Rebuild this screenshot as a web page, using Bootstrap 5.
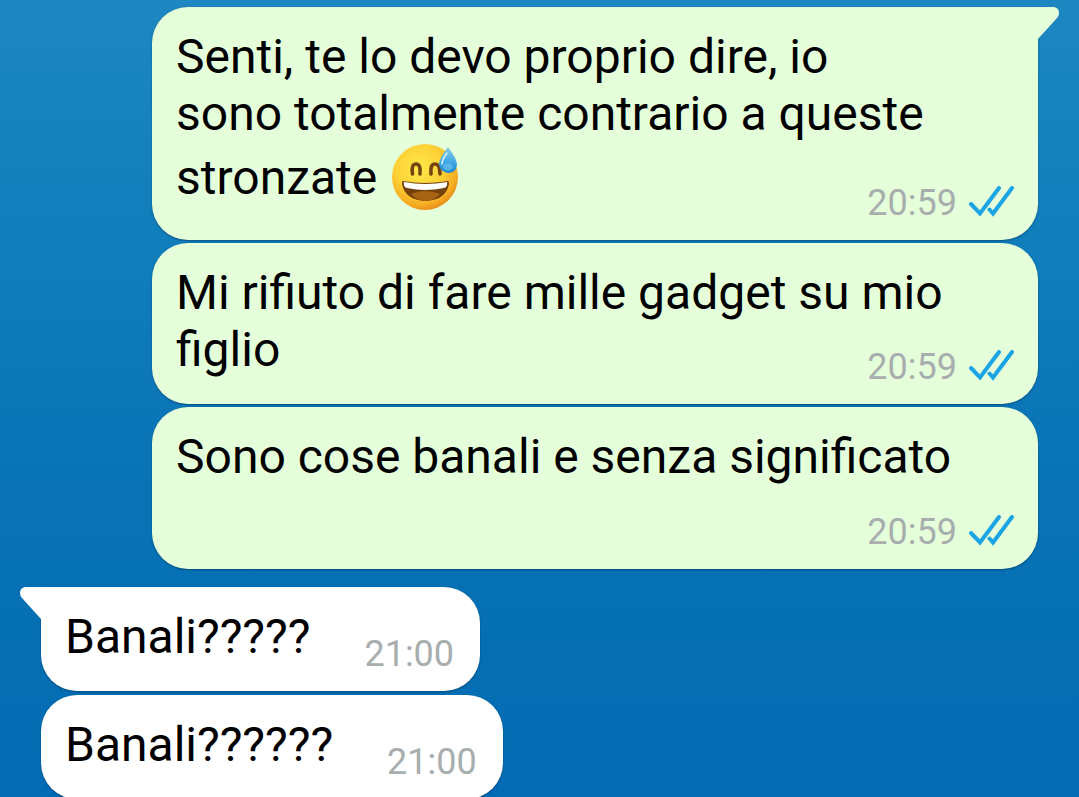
<!DOCTYPE html>
<html lang="it">
<head>
<meta charset="utf-8">
<meta name="viewport" content="width=device-width, initial-scale=1">
<title>Chat</title>
<link href="https://cdn.jsdelivr.net/npm/bootstrap@5.3.0/dist/css/bootstrap.min.css" rel="stylesheet">
<style>
  html { background: #026bb3; }
  body {
    font-family: Roboto, "Noto Sans", sans-serif;
    font-size: 48px;
    line-height: 57px;
    color: #000;
    background: linear-gradient(#1e87c2 0, #1784bf 90px, #0f7cbb 280px, #0873b5 480px, #026bb3 797px);
    height: 100vh;
    overflow: hidden;
  }
  .thread { padding: 7px 41px 0; }
  .outgoing { gap: 3px; margin-left: 111px; }
  .incoming { gap: 4px; margin-top: 18px; }
  .bubble {
    border-radius: 36px;
    padding: 21px 24px 16px;
    box-shadow: 0 1px 2px rgba(0, 40, 70, .5);
  }
  .outgoing .bubble { background: #e5ffdb; }
  .incoming .bubble { background: #fff; gap: 54px; padding: 21px 26px 16px 24px; }
  .incoming .message { margin-bottom: 10px; }
  .stamp { font-size: 36px; line-height: 42px; color: #a8aeae; gap: 12px; }
  .outgoing .stamp { margin-top: 26px; }
  .outgoing .stamp.tucked { margin-top: -32px; }
  .tail { top: 0; width: 22px; height: 34px; }
  .tail-end { left: 100%; fill: #e5ffdb; margin-left: -1px; }
  .tail-start { right: 100%; fill: #fff; margin-right: -1px; }
  .bubble.first-out { border-top-right-radius: 0; }
  .bubble.first-in { border-top-left-radius: 0; }
  .emoji { width: 68px; height: 72px; margin-left: 2px; vertical-align: -20px; }
  .ticks { width: 45px; height: 34px; }
</style>
</head>
<body>
<svg class="d-none" aria-hidden="true">
  <symbol id="ticks" viewBox="0 0 45 34">
    <path d="M2 18 11 27.500 30 2M20.500 23.500 24 27.500 43 2" fill="none" stroke="#1ba5e4" stroke-width="4" stroke-linecap="round" stroke-linejoin="miter"/>
  </symbol>
</svg>

<main class="thread">
  <section class="outgoing d-flex flex-column">
    <article class="bubble first-out position-relative">
      <svg class="tail tail-end position-absolute" viewBox="0 0 22 34" aria-hidden="true"><path d="M0 0H17Q22 1 22 6Q22 9 20 11L1 32V34H0Z"/></svg>
      <p class="message mb-0">Senti, te lo devo proprio dire, io<br>sono totalmente contrario a queste<br>stronzate <svg class="emoji" viewBox="0 0 68 72" role="img" aria-label="Sorriso con goccia di sudore">
        <defs>
          <radialGradient id="face" cx=".42" cy=".36" r=".66">
            <stop offset="0" stop-color="#ffe94a"/><stop offset=".55" stop-color="#fdd136"/><stop offset=".85" stop-color="#f5ad23"/><stop offset="1" stop-color="#e88b18"/>
          </radialGradient>
          <linearGradient id="drop" x1="0" y1="0" x2="0" y2="1">
            <stop offset="0" stop-color="#8cc9e6"/><stop offset=".5" stop-color="#4aaee5"/><stop offset="1" stop-color="#1787d2"/>
          </linearGradient>
        </defs>
        <circle cx="34" cy="35" r="33" fill="url(#face)"/>
        <path d="M21.500 32Q20 22 25 22T29 32M40 32Q39 22 44 22T49 32" fill="none" stroke="#754511" stroke-width="3.600" stroke-linecap="round"/>
        <path d="M12 39Q33 43 57 39Q58 39 58 42Q55 58 34.500 59Q14 58 11 42Q11 39 12 39Z" fill="#74410b"/>
        <path d="M20 52Q34 46 49 52Q43 58.500 34.500 59Q26 58.500 20 52Z" fill="#a76412"/>
        <path d="M13 40Q34 44 56 40Q57 45 53 46Q34 50 16 46Q12 45 13 40Z" fill="#fff"/>
        <path d="M57 5Q66 17 66 23Q65 31 57 31Q49 30 48 22Q48 17 57 5Z" fill="url(#drop)"/>
        <ellipse cx="57" cy="25" rx="5" ry="3.500" fill="#8bd8f5" opacity=".45"/>
        <path d="M56 11Q51 18 51 22" fill="none" stroke="#d9f2fb" stroke-width="1.500" stroke-linecap="round"/>
      </svg></p>
      <div class="stamp tucked d-flex justify-content-end align-items-center"><time>20:59</time><svg class="ticks" role="img" aria-label="Letto"><use href="#ticks"/></svg></div>
    </article>
    <article class="bubble">
      <p class="message mb-0">Mi rifiuto di fare mille gadget su mio<br>figlio</p>
      <div class="stamp tucked d-flex justify-content-end align-items-center"><time>20:59</time><svg class="ticks" role="img" aria-label="Letto"><use href="#ticks"/></svg></div>
    </article>
    <article class="bubble">
      <p class="message mb-0">Sono cose banali e senza significato</p>
      <div class="stamp d-flex justify-content-end align-items-center"><time>20:59</time><svg class="ticks" role="img" aria-label="Letto"><use href="#ticks"/></svg></div>
    </article>
  </section>

  <section class="incoming d-flex flex-column align-items-start">
    <article class="bubble first-in position-relative d-flex align-items-end">
      <svg class="tail tail-start position-absolute" viewBox="0 0 22 34" aria-hidden="true"><path d="M22 0H5Q0 1 0 6Q0 9 2 11L21 32V34H22Z"/></svg>
      <p class="message">Banali?????</p>
      <time class="stamp">21:00</time>
    </article>
    <article class="bubble d-flex align-items-end">
      <p class="message">Banali??????</p>
      <time class="stamp">21:00</time>
    </article>
  </section>
</main>
<script src="https://cdn.jsdelivr.net/npm/bootstrap@5.3.0/dist/js/bootstrap.bundle.min.js"></script>
</body>
</html>
